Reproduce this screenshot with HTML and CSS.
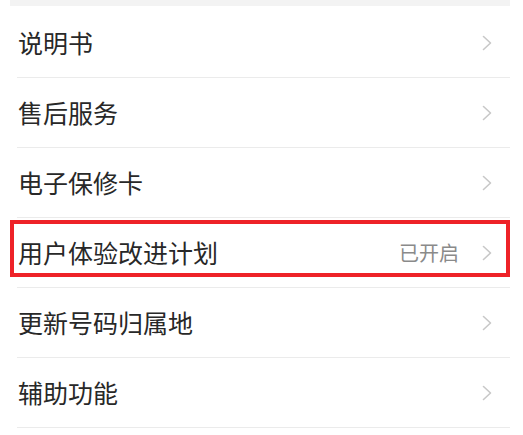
FILE: index.html
```html
<!DOCTYPE html>
<html lang="zh-CN">
<head>
<meta charset="utf-8">
<link rel="stylesheet" href="styles.css">
</head>
<body>
<div class="page">
  <div class="top-band"></div>
  <ul class="menu">
    <li class="row"><span class="label">说明书</span><span class="right"><svg class="chev" viewBox="0 0 10 16"><path d="M1.5 1.5 L8.5 8 L1.5 14.5"/></svg></span></li>
    <li class="row"><span class="label">售后服务</span><span class="right"><svg class="chev" viewBox="0 0 10 16"><path d="M1.5 1.5 L8.5 8 L1.5 14.5"/></svg></span></li>
    <li class="row"><span class="label">电子保修卡</span><span class="right"><svg class="chev" viewBox="0 0 10 16"><path d="M1.5 1.5 L8.5 8 L1.5 14.5"/></svg></span></li>
    <li class="row"><span class="label">用户体验改进计划</span><span class="right"><span class="value">已开启</span><svg class="chev" viewBox="0 0 10 16"><path d="M1.5 1.5 L8.5 8 L1.5 14.5"/></svg></span></li>
    <li class="row"><span class="label">更新号码归属地</span><span class="right"><svg class="chev" viewBox="0 0 10 16"><path d="M1.5 1.5 L8.5 8 L1.5 14.5"/></svg></span></li>
    <li class="row"><span class="label">辅助功能</span><span class="right"><svg class="chev" viewBox="0 0 10 16"><path d="M1.5 1.5 L8.5 8 L1.5 14.5"/></svg></span></li>
  </ul>
  <div class="highlight"></div>
</div>
</body>
</html>
```
FILE: styles.css
```css
html, body {
  margin: 0;
  padding: 0;
  background: #ffffff;
}
.page {
  position: relative;
  width: 523px;
  height: 435px;
  overflow: hidden;
  font-family: "Noto Sans CJK SC", "Noto Sans", sans-serif;
}
.top-band {
  margin: 0 13px 0 10px;
  height: 6px;
  background: #f3f3f3;
}
.menu {
  list-style: none;
  margin: 2px 13px 0 17px;
  padding: 0;
}
.row {
  height: 69px;
  border-bottom: 1px solid #ebebeb;
  display: flex;
  align-items: center;
  justify-content: space-between;
}
.label {
  font-size: 25px;
  color: #282828;
  padding-left: 1px;
  line-height: 1;
}
.right {
  display: flex;
  align-items: center;
  gap: 23px;
  padding-right: 18px;
}
.value {
  font-size: 20px;
  color: #8a8a8a;
  line-height: 1;
}
.chev {
  width: 10px;
  height: 16px;
  display: block;
}
.chev path {
  fill: none;
  stroke: #c8c8c8;
  stroke-width: 1.6;
  stroke-linecap: round;
  stroke-linejoin: round;
}
.highlight {
  position: absolute;
  left: 10px;
  top: 220px;
  width: 500px;
  height: 57px;
  box-sizing: border-box;
  border: 4px solid #ee2228;
  pointer-events: none;
}
```
